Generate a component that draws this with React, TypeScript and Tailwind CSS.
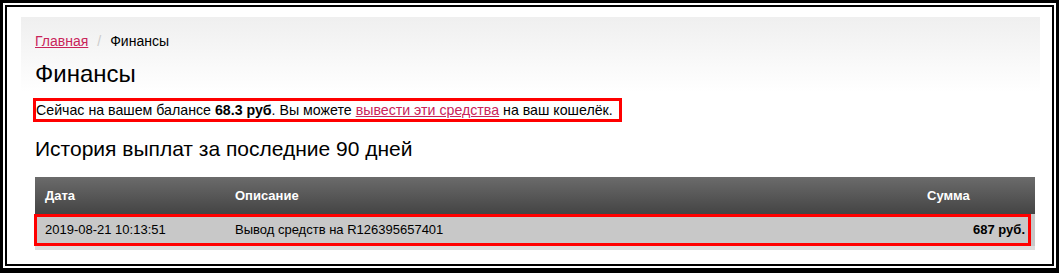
import React from 'react';

const font = { fontFamily: '"Liberation Sans", Arial, sans-serif' };

export default function App() {
  return (
    <div style={font} className="w-[1059px] h-[273px] bg-white overflow-hidden border-[3px] border-b-[5px] border-black p-[2px] text-black">
      <div className="h-full border-2 border-black pl-[14px] pr-[12px] pt-[10px]">
        <div className="h-full bg-[linear-gradient(to_bottom,#efefef,#ffffff_75px)] pl-[14px] pr-[5px] pt-[14px]">
          {/* хлебные крошки */}
          <div className="flex items-center text-[14px] leading-[20px]">
            <a href="#" className="text-[#c9245a] underline">Главная</a>
            <span className="mx-[9px] text-[#cccccc]">/</span>
            <span>Финансы</span>
          </div>

          <h1 className="mt-[8px] text-[24px] leading-[30px] font-normal">Финансы</h1>

          <div className="mt-[9px] ml-[-2px] inline-block border-[3px] border-[#ff0000] pl-[0px] pr-[6px] text-[14.2px] leading-[18px]">
            Сейчас на вашем балансе <b>68.3 руб</b>. Вы можете{' '}
            <a href="#" className="text-[#c9245a] underline">вывести эти средства</a> на ваш кошелёк.
          </div>

          <h2 className="mt-[15px] text-[21px] leading-[24px] font-normal">История выплат за последние 90 дней</h2>

          <div className="mt-[16px]">
            <div className="flex h-[37px] items-center bg-[linear-gradient(to_bottom,#6b6b6b,#444444)] text-[13px] font-bold text-white">
              <div className="w-[190px] pl-[10px]">Дата</div>
              <div className="flex-1 pl-[10px]">Описание</div>
              <div className="w-[118px] pl-[10px]">Сумма</div>
            </div>
            <div className="relative flex h-[32px] items-center bg-[#c8c8c8] text-[13px]">
              <div className="w-[190px] pl-[10px]">2019-08-21 10:13:51</div>
              <div className="flex-1 pl-[10px]">Вывод средств на R126395657401</div>
              <div className="w-[118px] pr-[10px] text-right font-bold">687 руб.</div>
              <div className="absolute left-[-1px] right-[4px] top-0 bottom-0 border-[3px] border-[#ff0000]" />
            </div>
            <div className="h-[4px] bg-[#dddddd]" />
          </div>
        </div>
      </div>
    </div>
  );
}
